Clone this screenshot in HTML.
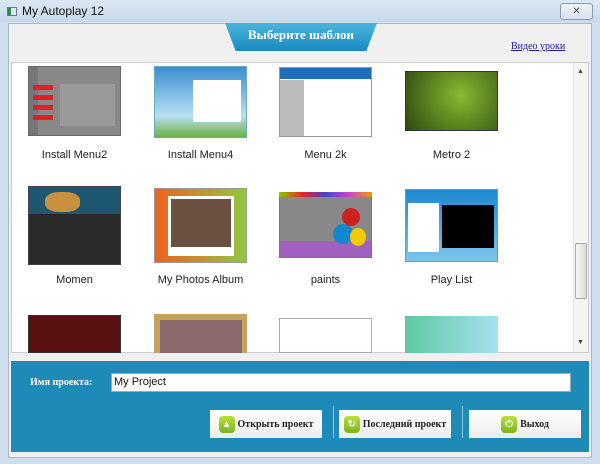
<!DOCTYPE html><html><head><meta charset="utf-8"><style>
*{margin:0;padding:0;box-sizing:border-box}
body{width:600px;height:464px;background:#cfdeed;font-family:"Liberation Sans","Noto Sans CJK SC",sans-serif;position:relative;overflow:hidden}
.a{position:absolute}
.t{width:93px;text-align:center;font-size:11px;color:#222}
.btn{position:absolute;top:410px;width:112px;height:28px;background:linear-gradient(#fff,#ececec);font-family:"Liberation Serif",serif;font-weight:bold;font-size:10px;color:#222;display:flex;align-items:center;justify-content:center;gap:3px;white-space:nowrap}
.ic{width:16px;height:17px;border-radius:4px;background:linear-gradient(#b8e03a,#7ab51c);color:#fff;font-size:10px;display:flex;align-items:center;justify-content:center}
.sep{position:absolute;top:406px;width:1px;height:32px;background:#8ec4dd}
</style></head><body>
<div class="a" style="left:0;top:0;width:600px;height:22px;background:linear-gradient(#dbe7f3,#c9d9ea)"></div>
<div class="a" style="left:7px;top:7px;width:10px;height:9px;border:1px solid #6a7a8a;background:linear-gradient(90deg,#2a8a4a 40%,#e0e8f0 40%)"></div>
<div class="a" style="left:22px;top:4px;font-size:12px;color:#111">My Autoplay 12</div>
<div class="a" style="left:560px;top:3px;width:33px;height:17px;border:1px solid #8a9bb0;border-radius:3px;background:linear-gradient(#eef3f8,#d5e0ec);font-size:10px;color:#555;text-align:center;line-height:15px">✕</div>
<div class="a" style="left:8px;top:23px;width:584px;height:435px;background:#f0f0f0;border:1px solid #a8b8c8"></div>
<div class="a" style="left:225px;top:23px;width:152px;height:28px;background:linear-gradient(#4bb5df,#1a89bf);clip-path:polygon(0 0,100% 0,93% 100%,7% 100%);border-radius:0 0 8px 8px"></div>
<div class="a" style="left:225px;top:27px;width:152px;text-align:center;color:#fff;font-family:'Liberation Serif',serif;font-weight:bold;font-size:13px">Выберите шаблон</div>
<div class="a" style="left:511px;top:41px;font-family:'Liberation Serif',serif;font-size:10px;color:#1a1aa0;text-decoration:underline">Видео уроки</div>
<div class="a" style="left:11px;top:62px;width:578px;height:291px;background:#fff;border:1px solid #ccc;overflow:hidden">
 <div class="a" style="left:561px;top:0;width:16px;height:291px;background:#f4f4f4;border-left:1px solid #e5e5e5"></div>
 <div class="a" style="left:563px;top:180px;width:12px;height:56px;border:1px solid #aaa;border-radius:2px;background:linear-gradient(90deg,#f4f4f4,#dcdcdc)"></div>
 <div class="a" style="left:565px;top:5px;font-size:7px;color:#444">▲</div>
 <div class="a" style="left:565px;top:276px;font-size:7px;color:#444">▼</div>
</div>
<!-- row1 -->
<div class="a" style="left:28px;top:66px;width:93px;height:70px;background:linear-gradient(90deg,#777 0 10%,#888 10%);border:1px solid #666"></div>
<div class="a" style="left:33px;top:85px;width:20px;height:5px;background:#d22"></div><div class="a" style="left:33px;top:95px;width:20px;height:5px;background:#d22"></div><div class="a" style="left:33px;top:105px;width:20px;height:5px;background:#d22"></div><div class="a" style="left:33px;top:115px;width:20px;height:5px;background:#d22"></div>
<div class="a" style="left:60px;top:84px;width:55px;height:42px;background:#999"></div>
<div class="a" style="left:154px;top:66px;width:93px;height:72px;background:linear-gradient(#3a8fd0,#b8e0f4 70%,#6cb040);border:1px solid #6ab"></div>
<div class="a" style="left:193px;top:80px;width:48px;height:42px;background:#fff"></div>
<div class="a" style="left:279px;top:67px;width:93px;height:70px;background:linear-gradient(#1e6ec0 0 16%,#fff 16%);border:1px solid #999"></div>
<div class="a" style="left:280px;top:80px;width:24px;height:56px;background:#bbb"></div>
<div class="a" style="left:405px;top:71px;width:93px;height:60px;background:radial-gradient(circle at 60% 40%,#8ab830,#2a4a10);border:1px solid #333"></div>
<!-- row2 -->
<div class="a" style="left:28px;top:186px;width:93px;height:79px;background:linear-gradient(#1e5870 0 35%,#2a2a2a 35%);border:1px solid #444"></div>
<div class="a" style="left:45px;top:192px;width:35px;height:20px;background:#c89040;border-radius:40%"></div>
<div class="a" style="left:154px;top:188px;width:93px;height:75px;background:linear-gradient(90deg,#f06020,#90c840);border:1px solid #999"></div>
<div class="a" style="left:168px;top:196px;width:66px;height:60px;background:#fff"></div>
<div class="a" style="left:171px;top:199px;width:60px;height:48px;background:#6a5040"></div>
<div class="a" style="left:279px;top:192px;width:93px;height:66px;background:linear-gradient(#888 0 75%,#a060c0 75%);border:1px solid #777"></div>
<div class="a" style="left:279px;top:192px;width:93px;height:5px;background:linear-gradient(90deg,#8c0,#e22,#44c,#c4c,#e90)"></div>
<div class="a" style="left:342px;top:208px;width:18px;height:18px;border-radius:50%;background:#c22"></div>
<div class="a" style="left:333px;top:224px;width:20px;height:20px;border-radius:50%;background:#18c"></div>
<div class="a" style="left:350px;top:228px;width:16px;height:18px;border-radius:50%;background:#ec0"></div>
<div class="a" style="left:405px;top:189px;width:93px;height:73px;background:linear-gradient(#1e88d0,#7cc4ec);border:1px solid #69c"></div>
<div class="a" style="left:442px;top:205px;width:52px;height:43px;background:#000"></div>
<div class="a" style="left:408px;top:203px;width:31px;height:49px;background:#fff"></div>
<!-- row3 -->
<div class="a" style="left:28px;top:315px;width:93px;height:38px;background:#5a1010;border:1px solid #333"></div>
<div class="a" style="left:154px;top:314px;width:93px;height:39px;background:#c8a060"></div>
<div class="a" style="left:160px;top:320px;width:82px;height:33px;background:#8a6a6a"></div>
<div class="a" style="left:279px;top:318px;width:93px;height:35px;background:#fff;border:1px solid #aaa"></div>
<div class="a" style="left:405px;top:316px;width:93px;height:37px;background:linear-gradient(90deg,#5cc8a0,#a8e0f0)"></div>
<div class="a t" style="left:28px;top:149px">Install Menu2</div>
<div class="a t" style="left:154px;top:149px">Install Menu4</div>
<div class="a t" style="left:279px;top:149px">Menu 2k</div>
<div class="a t" style="left:405px;top:149px">Metro 2</div>
<div class="a t" style="left:28px;top:274px">Momen</div>
<div class="a t" style="left:154px;top:274px">My Photos Album</div>
<div class="a t" style="left:279px;top:274px">paints</div>
<div class="a t" style="left:405px;top:274px">Play List</div>
<div class="a" style="left:11px;top:361px;width:578px;height:91px;background:#1e8ab8"></div>
<div class="a" style="left:30px;top:377px;font-family:'Liberation Serif',serif;font-weight:bold;font-size:10px;color:#fff">Имя проекта:</div>
<div class="a" style="left:111px;top:373px;width:460px;height:19px;background:#fff;border:1px solid #9ab;font-size:11px;padding:2px 2px;color:#111">My Project</div>
<div class="btn" style="left:210px"><span class="ic">▲</span>Открыть проект</div>
<div class="sep" style="left:333px"></div>
<div class="btn" style="left:339px"><span class="ic">↻</span>Последний проект</div>
<div class="sep" style="left:462px"></div>
<div class="btn" style="left:469px"><span class="ic">⏻</span>Выход</div>
</body></html>
